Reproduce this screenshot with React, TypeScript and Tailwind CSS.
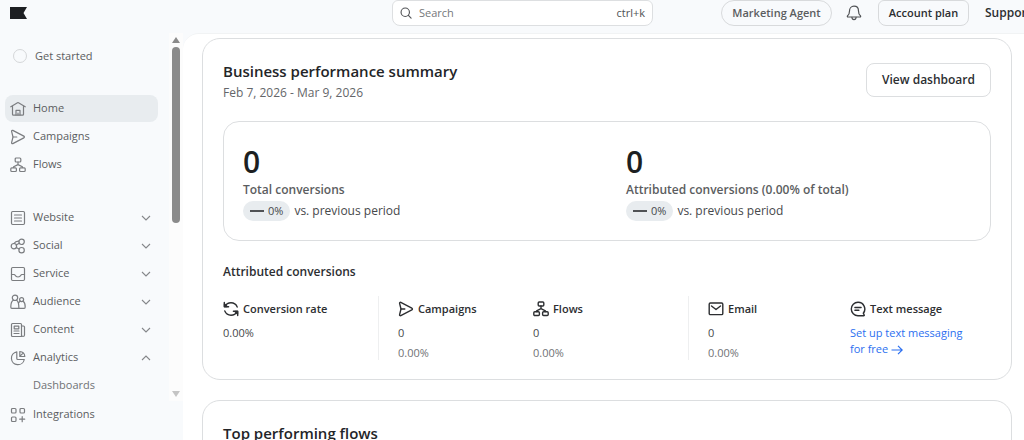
import type { ReactNode } from "react";

type IconName =
  | "home"
  | "campaigns"
  | "flows"
  | "website"
  | "social"
  | "service"
  | "audience"
  | "content"
  | "analytics"
  | "integrations"
  | "rate"
  | "email"
  | "message"
  | "bell"
  | "search";

const iconShapes: Record<IconName, ReactNode> = {
  home: (
    <>
      <path d="M.8 5.800 7.500 1.700a1 1 0 0 1 1 0l6.700 4.100" />
      <path d="M2.500 5.300v7.900c0 .6.400 1 1 1h9c.6 0 1-.4 1-1V5.300" />
      <path d="M6 14V9.400h4V14M8 12v2" />
    </>
  ),
  campaigns: (
    <>
      <path d="M1.600 2.400c-.2-.8.500-1.300 1.200-1l11 5.700c.8.400.8 1.400 0 1.800l-11 5.700c-.7.300-1.400-.2-1.200-1L3 8Z" />
      <path d="M3 8h3.800" />
    </>
  ),
  flows: (
    <>
      <rect x="5.200" y="1" width="5.600" height="4" rx="1" />
      <rect x=".8" y="10.800" width="5.600" height="3.700" rx="1" />
      <rect x="9.600" y="10.800" width="5.600" height="3.700" rx="1" />
      <path d="M8 5v2.600M3.600 10.500V9.800L8 7.600l4.400 2.200v.7" />
    </>
  ),
  website: (
    <>
      <rect x="1.500" y="1.500" width="13" height="13" rx="1.200" />
      <path d="M4.500 5h7M4.500 8h7M4.500 11h7" />
    </>
  ),
  social: (
    <>
      <circle cx="3.900" cy="8.200" r="2.700" />
      <circle cx="11.600" cy="3.800" r="2.700" />
      <circle cx="11.600" cy="12.200" r="2.700" />
      <path d="M3.900 5.500c1.200-1.700 2.600-2.500 5-2.300M6.300 9.500l2.700 1.500M6.200 6.900l3-1.700" />
    </>
  ),
  service: (
    <>
      <rect x="1.500" y="1.500" width="13" height="13" rx="1.200" />
      <path d="M1.500 8.500h2.600c.5 0 .8.300 1 .7.600 1.200 1.500 1.800 2.900 1.800s2.300-.6 2.900-1.800c.2-.4.500-.7 1-.7h2.600" />
    </>
  ),
  audience: (
    <>
      <circle cx="5" cy="3.800" r="2.700" />
      <circle cx="11.600" cy="5.600" r="2" />
      <path d="M3.300 6.200C1.500 7.200.8 9.500.8 13c0 .8.300 1.300 1 1.300h12.400c.7 0 1-.5 1-1.300 0-2.700-.6-4.700-2-5.700M6.700 6.200c1.500 1 2.200 3.200 2.200 8M10.100 7.200c-.8.500-1.300 1.300-1.600 2.200" />
    </>
  ),
  content: (
    <>
      <path d="M2.500 1.500h8c.6 0 1 .4 1 1v12h-9c-.6 0-1-.4-1-1v-11c0-.6.400-1 1-1Z" />
      <path d="M11.500 4h2c.6 0 1 .4 1 1v8c0 .9-.6 1.500-1.500 1.500s-1.500-.6-1.500-1.500M4 9h5M4 11.500h5" />
      <rect x="4.200" y="4.200" width="4.600" height="2.600" />
    </>
  ),
  analytics: (
    <>
      <path d="M6.800 1.800A6.500 6.500 0 1 0 14.300 9.500H7.800a1 1 0 0 1-1-1Z" />
      <path d="M9.800 1.500v5h5c-.2-2.700-2.300-4.800-5-5ZM10 6.200l2.600-2.600" />
    </>
  ),
  integrations: (
    <>
      <rect x="1.500" y="1.500" width="4.500" height="4.500" rx="1" />
      <rect x="10" y="1.500" width="4.500" height="4.500" rx="1" />
      <rect x="1.500" y="10" width="4.500" height="4.500" rx="1" />
      <path d="M12.200 9.700v5M9.700 12.200h5" />
    </>
  ),
  rate: (
    <>
      <path d="M1.300 1.500v4.300h4.300M2 5.400C3.200 3.100 5.200 1.800 8 1.800c3 0 5.200 1.800 6.200 4.200" />
      <path d="M14.700 14.500v-4.300h-4.300M14 10.600c-1.200 2.300-3.200 3.600-6 3.600-3 0-5.200-1.800-6.200-4.200" />
      <path d="m1.500 3 2.500 2.600H1.500ZM14.500 13 12 10.400h2.500Z" fill="currentColor" />
    </>
  ),
  email: (
    <>
      <rect x="1.200" y="2" width="13.600" height="11.600" rx="1.200" />
      <path d="m3.500 5 4.500 3.500L12.500 5" />
    </>
  ),
  message: (
    <>
      <path d="M8 1.300a6.700 6.700 0 1 0 0 13.400h5.700c.5 0 .8-.5.500-.9l-.9-1.600A6.700 6.700 0 0 0 8 1.300Z" />
      <path d="M4.900 6.500h6.200M4.900 9.300h4" />
    </>
  ),
  bell: (
    <>
      <path d="M8 1.200c-2.700 0-4.500 2-4.500 4.700 0 2.600-.7 3.800-1.900 4.800-.5.500-.3 1.300.4 1.300h12c.7 0 .9-.8.400-1.300-1.200-1-1.900-2.200-1.900-4.800 0-2.700-1.800-4.700-4.500-4.700Z" />
      <path d="M5.900 12.300c.1 1.400.9 2.300 2.100 2.300s2-.9 2.100-2.300" />
    </>
  ),
  search: (
    <>
      <circle cx="7" cy="7" r="5.600" />
      <path d="m11.200 11.200 3.600 3.600" />
    </>
  ),
};

function Icon({
  name,
  className = "size-4",
  weight = 1.2,
}: {
  name: IconName;
  className?: string;
  weight?: number;
}) {
  return (
    <svg
      viewBox="0 0 16 16"
      fill="none"
      stroke="currentColor"
      strokeWidth={weight}
      strokeLinecap="round"
      strokeLinejoin="round"
      aria-hidden="true"
      className={`shrink-0 ${className}`}
    >
      {iconShapes[name]}
    </svg>
  );
}

function Chevron({ open = false }: { open?: boolean }) {
  return (
    <svg
      viewBox="0 0 10 6"
      fill="none"
      stroke="currentColor"
      strokeWidth="1.1"
      aria-hidden="true"
      className="ml-auto h-[6px] w-[10px] shrink-0 text-[#85878a]"
    >
      <path d={open ? "m1 5 4-4 4 4" : "m1 1 4 4 4-4"} />
    </svg>
  );
}

const primaryLinks: { label: string; icon: IconName; active?: boolean }[] = [
  { label: "Home", icon: "home", active: true },
  { label: "Campaigns", icon: "campaigns" },
  { label: "Flows", icon: "flows" },
];

const sections: { label: string; icon: IconName; open?: boolean }[] = [
  { label: "Website", icon: "website" },
  { label: "Social", icon: "social" },
  { label: "Service", icon: "service" },
  { label: "Audience", icon: "audience" },
  { label: "Content", icon: "content" },
  { label: "Analytics", icon: "analytics", open: true },
];

const stats = [
  { value: "0", label: "Total conversions", change: "0%" },
  { value: "0", label: "Attributed conversions (0.00% of total)", change: "0%" },
];

function TopBar() {
  return (
    <header className="grid h-[33px] shrink-0 grid-cols-[minmax(0,1fr)_261px_371px] items-start overflow-hidden">
      <a href="#home" aria-label="Home" className="ml-[10px] mt-[7px] w-[17px]">
        <svg viewBox="0 0 17 12" className="h-3 w-[17px] fill-[#1d1f22]" aria-hidden="true">
          <path d="M0 0h17l-3.500 6 3.500 6H0Z" />
        </svg>
      </a>
      <label className="flex h-[26px] items-center rounded-b-lg rounded-t-md border border-[#dddfe1] bg-white px-[7px] text-[#505255]">
        <Icon name="search" className="size-3" weight={1.5} />
        <input
          type="search"
          aria-label="Search"
          placeholder="Search"
          className="ml-[7px] min-w-0 flex-1 bg-transparent text-[11px] outline-none placeholder:text-[#75777a]"
        />
        <span className="text-[11px]">ctrl+k</span>
      </label>
      <div className="flex items-center pl-[68px] text-[11px] whitespace-nowrap">
        <button
          type="button"
          className="h-[26px] w-[111px] shrink-0 rounded-full border border-[#d8dadc] font-semibold text-[#5b5d60]"
        >
          Marketing Agent
        </button>
        <button type="button" aria-label="Notifications" className="ml-[14px] shrink-0 text-[#505255]">
          <Icon name="bell" />
        </button>
        <button
          type="button"
          className="ml-4 h-[26px] w-[91px] shrink-0 rounded-b-lg rounded-t-md border border-[#d8dadc] font-semibold text-[#2c2e31]"
        >
          Account plan
        </button>
        <button type="button" className="ml-4 shrink-0 text-[12px] font-semibold text-[#2c2e31]">
          Support
        </button>
      </div>
    </header>
  );
}

function Sidebar() {
  return (
    <aside className="flex w-[183px] shrink-0 text-[11px] text-[#5b5d60]">
      <nav className="min-w-0 flex-1 pl-[5px] pr-[11px] pt-[9px]">
        <a href="#get-started" className="flex h-7 items-center gap-2 pl-2">
          <span className="size-[14px] rounded-full border border-[#d5d7d9]" />
          Get started
        </a>

        <ul className="mt-[25px] space-y-px">
          {primaryLinks.map((link) => (
            <li key={link.label}>
              <a
                href={`#${link.label.toLowerCase()}`}
                className={`flex h-[27px] items-center gap-[7px] rounded-lg pl-[5px] ${link.active ? "bg-[#e8ecef]" : ""}`}
              >
                <Icon name={link.icon} className="size-4 text-[#7b7d80]" />
                {link.label}
              </a>
            </li>
          ))}
        </ul>

        <ul className="mt-[26px] space-y-px">
          {sections.map((section) => (
            <li key={section.label}>
              <button
                type="button"
                aria-expanded={Boolean(section.open)}
                className="flex h-[27px] w-full items-center gap-[7px] pl-[5px] pr-[7px]"
              >
                <Icon name={section.icon} className="size-4 text-[#7b7d80]" />
                {section.label}
                <Chevron open={section.open} />
              </button>
            </li>
          ))}
        </ul>
        <a href="#dashboards" className="flex h-7 items-center pl-7 text-[#707275]">
          Dashboards
        </a>
        <a href="#integrations" className="flex h-[31px] items-center gap-[7px] pl-[5px]">
          <Icon name="integrations" className="size-4 text-[#7b7d80]" />
          Integrations
        </a>
      </nav>

      <div className="flex h-[368px] w-[14px] flex-col items-center bg-[#fcfcfc] pt-1" aria-hidden="true">
        <svg viewBox="0 0 8 6" className="h-[6px] w-2 fill-[#8b8b8b]">
          <path d="M4 0 8 6H0Z" />
        </svg>
        <div className="mt-1 h-[176px] w-2 rounded-full bg-[#8b8b8b]" />
        <svg viewBox="0 0 8 6" className="mb-1 mt-auto h-[6px] w-2 fill-[#c4c4c4]">
          <path d="M0 0h8L4 6Z" />
        </svg>
      </div>
    </aside>
  );
}

function Metric({
  icon,
  label,
  className = "",
  children,
}: {
  icon: IconName;
  label: string;
  className?: string;
  children: ReactNode;
}) {
  return (
    <div className={`h-16 pt-[5px] text-[11px] ${className}`}>
      <h4 className="flex h-4 items-center gap-1 whitespace-nowrap font-semibold text-[#2c2e31]">
        <Icon name={icon} weight={1.4} />
        {label}
      </h4>
      <div className="mt-2 leading-4">{children}</div>
    </div>
  );
}

function Values({ count, rate }: { count: string; rate: string }) {
  return (
    <>
      <p className="text-[#46484b]">{count}</p>
      <p className="mt-1 text-[#707275]">{rate}</p>
    </>
  );
}

function PerformanceSummary() {
  return (
    <section className="rounded-[18px] border border-[#dcdee0] bg-white px-5 pb-[19px] pt-6">
      <div className="flex h-[34px] justify-between">
        <div className="-mt-1">
          <h2 className="text-[15px] font-semibold leading-6 text-[#232528]">
            Business performance summary
          </h2>
          <p className="text-[12px] leading-5 text-[#646669]">Feb 7, 2026 - Mar 9, 2026</p>
        </div>
        <button
          type="button"
          className="h-[34px] w-[125px] rounded-lg border border-[#dcdee0] text-[12px] font-semibold text-[#2c2e31]"
        >
          View dashboard
        </button>
      </div>

      <div className="mt-6 grid grid-cols-2 rounded-2xl border border-[#dcdee0]">
        {stats.map((stat) => (
          <div key={stat.label} className="px-[19px] pb-[19px] pt-6">
            <p className="text-[30px] font-semibold leading-8 text-[#1d1f22]">{stat.value}</p>
            <p className="mt-[2px] text-[12px] font-semibold leading-5 text-[#5b5d60]">{stat.label}</p>
            <p className="mt-px flex h-5 items-center gap-1 text-[12px] text-[#46484b]">
              <span className="flex h-5 items-center gap-1 rounded-full bg-[#e8ecef] px-[7px] text-[11px]">
                <span className="h-[2px] w-[14px] bg-[#505255]" />
                {stat.change}
              </span>
              vs. previous period
            </p>
          </div>
        ))}
      </div>

      <h3 className="mt-[21px] text-[12px] font-semibold leading-5 text-[#2c2e31]">
        Attributed conversions
      </h3>
      <div className="mt-[14px] grid grid-cols-[155fr_155fr_155fr_162fr_141fr]">
        <Metric icon="rate" label="Conversion rate">
          <p className="text-[#46484b]">0.00%</p>
        </Metric>
        <Metric icon="campaigns" label="Campaigns" className="border-l border-[#eeeff0] pl-[19px]">
          <Values count="0" rate="0.00%" />
        </Metric>
        <Metric icon="flows" label="Flows">
          <Values count="0" rate="0.00%" />
        </Metric>
        <Metric icon="email" label="Email" className="border-l border-[#eeeff0] pl-[19px]">
          <Values count="0" rate="0.00%" />
        </Metric>
        <Metric icon="message" label="Text message">
          <a href="#text-messaging" className="block max-w-[125px] text-[#2b6ff0]">
            Set up text messaging for free{" "}
            <svg
              viewBox="0 0 12 10"
              fill="none"
              stroke="currentColor"
              strokeWidth="1.2"
              className="inline h-[10px] w-3"
              aria-hidden="true"
            >
              <path d="M.5 5h10.500M7 .8 11.200 5 7 9.200" />
            </svg>
          </a>
        </Metric>
      </div>
    </section>
  );
}

export default function App() {
  return (
    <div className="flex h-screen flex-col overflow-hidden bg-[#f8fafc] font-['Open_Sans','Noto_Sans',sans-serif]">
      <TopBar />
      <div className="flex min-h-0 flex-1">
        <Sidebar />
        <main className="min-w-0 flex-1 overflow-hidden rounded-tl-2xl border-t border-[#f1f3f4] bg-white pl-[19px] pr-3 pt-1">
          <PerformanceSummary />
          <section className="mt-5 rounded-[18px] border border-[#dcdee0] bg-white px-5 pb-40 pt-5">
            <h2 className="text-[15px] font-semibold leading-6 text-[#232528]">Top performing flows</h2>
          </section>
        </main>
      </div>
    </div>
  );
}
